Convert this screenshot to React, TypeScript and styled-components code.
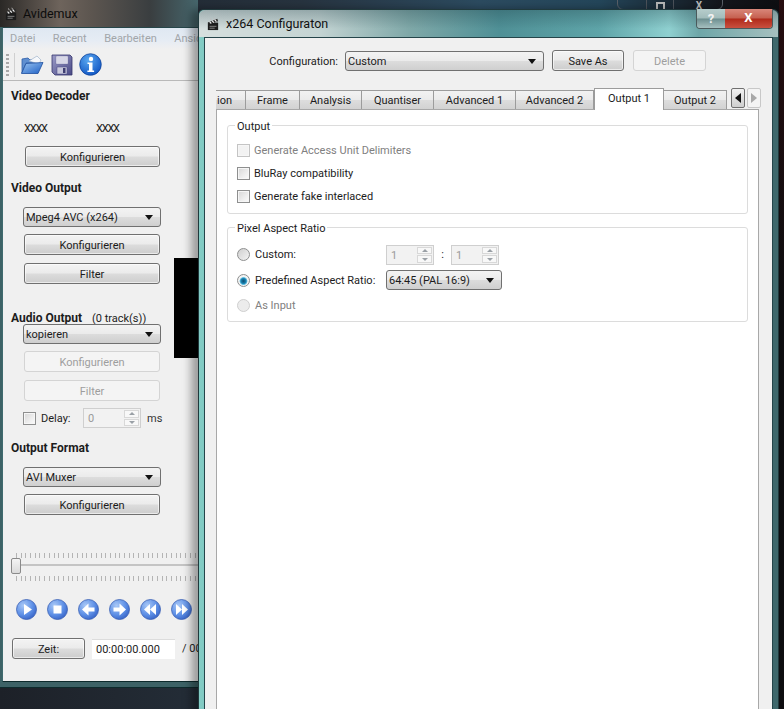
import styled, { createGlobalStyle } from "styled-components";

const GlobalStyle = createGlobalStyle`
  html, body {
    margin: 0;
    padding: 0;
    background: #000;
  }
  body {
    font-family: "Roboto", "Open Sans", sans-serif;
    font-size: 11px;
    color: #1c1c1c;
  }
  * {
    box-sizing: border-box;
  }
`;

const Desktop = styled.div`
  position: relative;
  width: 784px;
  height: 709px;
  overflow: hidden;
  background:
    linear-gradient(180deg, rgba(60, 12, 14, 0.55) 0, rgba(0, 0, 0, 0) 300px) 779px 0 no-repeat,
    linear-gradient(90deg, #1d2128 0, #27333f 300px, #2c4b60 480px, #24465a 600px, #14161c 720px, #0d0d10 100%);
`;

const BehindControls = styled.div`
  position: absolute;
  left: 617px;
  top: -6px;
  width: 106px;
  height: 16px;
  display: grid;
  grid-template-columns: 29px 27px 50px;
  border: 1px solid #5a6068;
  border-radius: 0 0 6px 6px;
  color: #b8b8b8;
  font-size: 10px;
  font-weight: 700;
  text-align: center;
`;

const BehindCell = styled.div`
  padding-top: 5px;
  border-right: 1px solid #4c525a;
  &:last-child {
    border-right: 0;
  }
`;

const BehindMax = styled.div`
  width: 9px;
  height: 9px;
  margin: 2px auto 0;
  border: 2px solid #b8b8b8;
`;

const MainWindow = styled.div`
  position: absolute;
  left: 0;
  top: 0;
  width: 198px;
  height: 688px;
  display: flex;
  flex-direction: column;
  padding: 0 0 5px 2px;
  border-bottom: 1px solid #0d2a2c;
  background:
    linear-gradient(90deg, #2a2826 0, #6e645c 60px, #5d5650 90px, #3a3e40 150px, #46666c 198px) 0 0 / 100% 27px no-repeat,
    #3d6266;
`;

const MainTitle = styled.div`
  flex: none;
  height: 27px;
  display: flex;
  align-items: center;
  gap: 6px;
  padding-left: 3px;
  font-size: 12.5px;
  color: #0c0c0c;
`;

const MainClient = styled.div`
  flex: 1;
  display: flex;
  flex-direction: column;
  overflow: hidden;
  background: #f0f0f0;
  border-top: 1px solid #26464a;
  border-left: 1px solid #3f6a6e;
  border-bottom: 1px solid #0d2a2c;
`;

const MenuBar = styled.div`
  flex: none;
  height: 21px;
  display: flex;
  align-items: center;
  gap: 17.5px;
  padding-left: 7px;
  color: #a2a6aa;
  white-space: nowrap;
  background: linear-gradient(180deg, #dfe8f2 0, #e6ecf4 60%, #f0f0f0 100%);
`;

const ToolBar = styled.div`
  flex: none;
  height: 32px;
  display: flex;
  align-items: center;
  gap: 5px;
  padding-left: 3px;
  border-bottom: 1px solid #b9b9b9;
`;

const Grip = styled.div`
  width: 3px;
  height: 22px;
  background: repeating-linear-gradient(180deg, #a8a8a8 0, #a8a8a8 2px, transparent 2px, transparent 4px);
`;

const ToolSeparator = styled.div`
  width: 1px;
  height: 24px;
  background: #d0d0d0;
`;

const ToolIcons = styled.div`
  display: flex;
  align-items: center;
  gap: 6px;
`;

const Panel = styled.div`
  flex: 1;
  display: flex;
  flex-direction: column;
  align-items: flex-start;
  padding-left: 8px;
`;

const Heading = styled.div<{ $gap: number }>`
  height: 12px;
  line-height: 12px;
  margin-top: ${(p) => p.$gap}px;
  font-size: 12px;
  font-weight: 700;
  white-space: nowrap;
`;

const TrackCount = styled.span`
  margin-left: 10px;
  font-size: 11px;
  font-weight: 400;
`;

const DecoderRow = styled.div`
  display: grid;
  grid-template-columns: 72px 40px;
  margin: 21px 0 0 13px;
  height: 12px;
  line-height: 12px;
  font-size: 11px;
  letter-spacing: -1.2px;
`;

const PushButton = styled.button<{ $width: number; $left?: number; $gap?: number }>`
  flex: none;
  width: ${(p) => p.$width}px;
  height: 21px;
  margin: ${(p) => p.$gap ?? 0}px 0 0 ${(p) => p.$left ?? 0}px;
  padding: 1px 0 0;
  font: inherit;
  color: #1c1c1c;
  border: 1px solid #707070;
  border-radius: 3px;
  background: linear-gradient(180deg, #f3f3f3 0, #ebebeb 48%, #dcdcdc 52%, #cdcdcd 100%);
  box-shadow: inset 0 0 0 1px rgba(255, 255, 255, 0.6);

  &:disabled {
    color: #9e9e9e;
    border-color: #d4d4d4;
    background: #f4f4f4;
    box-shadow: none;
  }
`;

const Combo = styled.div<{ $width: number; $left?: number; $gap?: number }>`
  flex: none;
  width: ${(p) => p.$width}px;
  height: 20px;
  margin: ${(p) => p.$gap ?? 0}px 0 0 ${(p) => p.$left ?? 0}px;
  display: flex;
  align-items: center;
  justify-content: space-between;
  padding: 1px 7px 0 2px;
  border: 1px solid #707070;
  border-radius: 3px;
  white-space: nowrap;
  background: linear-gradient(180deg, #f3f3f3 0, #ebebeb 48%, #dcdcdc 52%, #cfcfcf 100%);
`;

const ComboArrow = styled.span`
  width: 0;
  height: 0;
  border-left: 4px solid transparent;
  border-right: 4px solid transparent;
  border-top: 5px solid #111;
`;

const DelayRow = styled.div`
  display: flex;
  align-items: center;
  height: 20px;
  margin: 7px 0 0 12px;
  white-space: nowrap;
`;

const CheckBox = styled.span<{ $off?: boolean }>`
  flex: none;
  width: 13px;
  height: 13px;
  border: 1px solid ${(p) => (p.$off ? "#c4c4c4" : "#8e8f8f")};
  background: ${(p) =>
    p.$off ? "#f2f2f2" : "linear-gradient(135deg, #d6d6d6 0, #eeeeee 60%, #fbfbfb 100%)"};
  box-shadow: inset 0 0 0 1px #f6f6f6;
`;

const DelayLabel = styled.span`
  width: 42px;
  margin-left: 5px;
`;

const Spin = styled.div<{ $width: number }>`
  flex: none;
  width: ${(p) => p.$width}px;
  height: 20px;
  display: flex;
  justify-content: space-between;
  padding-left: 4px;
  line-height: 20px;
  color: #9a9a9a;
  border: 1px solid #cfcfcf;
  background: #f2f2f2;
`;

const SpinArrows = styled.div`
  width: 15px;
  margin: 1px;
  display: grid;
  grid-template-rows: 1fr 1fr;
  gap: 1px;
`;

const SpinArrow = styled.div<{ $down?: boolean }>`
  display: flex;
  align-items: center;
  justify-content: center;
  background: #f8f8f8;
  border: 1px solid #d8d8d8;

  &::before {
    content: "";
    border-left: 3px solid transparent;
    border-right: 3px solid transparent;
    ${(p) => (p.$down ? "border-top" : "border-bottom")}: 3px solid #9aa0a6;
  }
`;

const MsLabel = styled.span`
  margin-left: 6px;
  color: #333;
`;

const Slider = styled.div`
  position: relative;
  flex: none;
  width: 190px;
  height: 28px;
  margin: 38px 0 0 5px;
  background:
    repeating-linear-gradient(90deg, #b4b4b4 0, #b4b4b4 1px, transparent 1px, transparent 4.7px) 0 0 / 100% 5px no-repeat,
    linear-gradient(#c4c4c4, #c4c4c4) -5px 11px / 200px 2px no-repeat,
    repeating-linear-gradient(90deg, #b4b4b4 0, #b4b4b4 1px, transparent 1px, transparent 4.7px) 0 23px / 100% 5px no-repeat;
`;

const SliderHandle = styled.div`
  position: absolute;
  left: -5px;
  top: 5px;
  width: 10px;
  height: 16px;
  border: 1px solid #8a8a8a;
  border-radius: 2px;
  background: linear-gradient(180deg, #f4f4f4 0, #dadada 100%);
`;

const MediaRow = styled.div`
  display: flex;
  gap: 10px;
  margin: 18px 0 0 5px;
`;

const TimeRow = styled.div`
  display: flex;
  align-items: center;
  margin: 18px 0 0 1px;
  white-space: nowrap;
`;

const TimeField = styled.div`
  flex: none;
  width: 83px;
  height: 20px;
  margin-left: 7px;
  padding-left: 4px;
  line-height: 20px;
  background: #fff;
  border-top: 1px solid #dcdcdc;
`;

const TimeTotal = styled.span`
  margin-left: 7px;
`;

const VideoArea = styled.div`
  position: absolute;
  left: 174px;
  top: 258px;
  width: 24px;
  height: 100px;
  background: #000;
`;

const Dialog = styled.div`
  position: absolute;
  left: 198px;
  top: 9px;
  width: 581px;
  height: 720px;
  display: flex;
  flex-direction: column;
  padding: 0 5px;
  border: 1px solid #20393c;
  border-radius: 6px 6px 0 0;
  background: linear-gradient(90deg, #84cdc6 0, #7cc4bc 12px, #3f686c 12px, #3f686c 100%);
  box-shadow: -7px 0 8px rgba(0, 0, 0, 0.35);
`;

const DialogTitle = styled.div`
  position: relative;
  flex: none;
  height: 27px;
  margin: 0 -5px;
  display: flex;
  align-items: center;
  gap: 7px;
  padding-left: 8px;
  font-size: 12.5px;
  color: #111;
  border-radius: 6px 6px 0 0;
  background:
    linear-gradient(180deg, rgba(20, 50, 60, 0.28) 0, rgba(20, 50, 60, 0) 70%),
    linear-gradient(90deg, #d6dfde 0, #c4d4d3 120px, #7fa8a8 210px, #4f9096 300px, #5ea4a8 400px, #8fd0d0 470px, #6ea6a8 500px, #a6c0bf 100%);
`;

const TitleButtons = styled.div`
  position: absolute;
  right: 5px;
  top: -1px;
  height: 20px;
  display: flex;
  overflow: hidden;
  border: 1px solid #4a5a5c;
  border-top: 0;
  border-radius: 0 0 4px 4px;
  font-weight: 700;
  color: #fff;
`;

const HelpButton = styled.div`
  width: 28px;
  text-align: center;
  line-height: 19px;
  font-size: 13px;
  color: #f2f2f2;
  background: linear-gradient(180deg, #b7cdcc 0, #a2bcbb 48%, #6d8f90 52%, #a6c0c0 100%);
`;

const CloseButton = styled.div`
  width: 47px;
  text-align: center;
  line-height: 18px;
  font-size: 13px;
  background: linear-gradient(180deg, #d9877a 0, #c5604f 48%, #b02a1a 52%, #c9503f 100%);
`;

const DialogClient = styled.div`
  flex: 1;
  display: flex;
  flex-direction: column;
  min-height: 0;
  background: #f0f0f0;
  border: 1px solid #25454a;
  border-bottom: 0;
`;

const ConfigRow = styled.div`
  flex: none;
  display: flex;
  align-items: center;
  height: 21px;
  margin-top: 12px;
`;

const ConfigLabel = styled.div`
  width: 133px;
  padding-top: 1px;
  text-align: right;
`;

const TabStrip = styled.div`
  flex: none;
  width: 545px;
  height: 21px;
  margin: 17px 0 0 11px;
  display: flex;
  align-items: flex-end;
`;

const Tab = styled.div<{ $width: number; $active?: boolean }>`
  flex: none;
  width: ${(p) => p.$width}px;
  height: ${(p) => (p.$active ? 22 : 19)}px;
  margin-bottom: ${(p) => (p.$active ? -1 : 0)}px;
  line-height: 20px;
  text-align: center;
  border: 1px solid #9c9c9c;
  border-left: 0;
  border-bottom: 0;
  position: relative;
  z-index: ${(p) => (p.$active ? 1 : 0)};
  background: ${(p) =>
    p.$active ? "#fff" : "linear-gradient(180deg, #f2f2f2 0, #ebebeb 48%, #dddddd 52%, #d2d2d2 100%)"};

  ${(p) => p.$active && "border-left: 1px solid #9c9c9c;"}
`;

const ClippedTab = styled(Tab)`
  border-top: 1px solid #9c9c9c;
  text-align: left;
  padding-left: 1px;
`;

const TabScroll = styled.div`
  display: flex;
  gap: 2px;
  height: 20px;
  margin: 0 0 1px 4px;
  align-self: flex-start;
`;

const TabScrollButton = styled.div<{ $left?: boolean }>`
  width: 14px;
  display: flex;
  align-items: center;
  justify-content: center;
  border: 1px solid ${(p) => (p.$left ? "#707070" : "#c8c8c8")};
  border-radius: 2px;
  background: ${(p) => (p.$left ? "linear-gradient(180deg, #f2f2f2, #cfcfcf)" : "#f4f4f4")};

  &::before {
    content: "";
    border-top: 5px solid transparent;
    border-bottom: 5px solid transparent;
    ${(p) => (p.$left ? "border-right: 6px solid #111;" : "border-left: 6px solid #a8a8a8;")}
  }
`;

const TabPanel = styled.div`
  flex: 1;
  width: 543px;
  margin-left: 11px;
  padding: 9px 10px 0;
  background: #fff;
  border: 1px solid #a8a8a8;
`;

const Group = styled.fieldset<{ $gap?: number; $top: number; $bottom: number }>`
  margin: ${(p) => p.$gap ?? 0}px 0 0;
  padding: ${(p) => p.$top}px 9px ${(p) => p.$bottom}px;
  min-width: 0;
  border: 1px solid #dcdcdc;
  border-radius: 3px;
`;

const GroupTitle = styled.legend`
  height: 12px;
  line-height: 15px;
  margin-left: -2px;
  padding: 0 2px;
`;

const CheckRow = styled.div<{ $off?: boolean }>`
  display: flex;
  align-items: center;
  gap: 4px;
  height: 23px;
  color: ${(p) => (p.$off ? "#808080" : "#1c1c1c")};
`;

const RatioRow = styled.div<{ $off?: boolean }>`
  display: grid;
  grid-template-columns: 18px 131px auto;
  align-items: center;
  height: 25.5px;
  color: ${(p) => (p.$off ? "#808080" : "#1c1c1c")};
`;

const Radio = styled.span<{ $on?: boolean; $off?: boolean }>`
  width: 13px;
  height: 13px;
  border-radius: 50%;
  border: 1px solid ${(p) => (p.$off ? "#cfcfcf" : "#8e8f8f")};
  background: ${(p) =>
    p.$on
      ? "radial-gradient(circle at 50% 55%, #0b4a6e 0, #1d86b4 32%, #6cc4e4 44%, #f4f4f4 52%)"
      : p.$off
        ? "#ececec"
        : "linear-gradient(135deg, #cfcfcf 0, #f4f4f4 100%)"};
`;

const SpinPair = styled.div`
  display: flex;
  align-items: center;
`;

const SpinColon = styled.span`
  width: 17px;
  text-align: center;
`;

const Clapper = () => (
  <svg width="12" height="14" viewBox="0 0 14 15" preserveAspectRatio="none">
    <path d="M1 6h12v8H1z" fill="#1c1c1c" />
    <path d="M1 6l11-4 1 2.5L2 8z" fill="#2a2a2a" />
    <path d="M3 5l2 2M6 4l2 2M9 3l2 2" stroke="#eee" strokeWidth="1.3" />
    <path d="M4 1.5l1 2M8 .8l1 2" stroke="#bbb" strokeWidth="1" />
    <path d="M3 10h8M3 12h6" stroke="#8a8a8a" strokeWidth="1" />
  </svg>
);

const FolderIcon = () => (
  <svg width="24" height="22" viewBox="0 0 24 22">
    <defs>
      <linearGradient id="folderFill" x1="0" y1="0" x2="1" y2="1">
        <stop offset="0" stopColor="#9cc6f2" />
        <stop offset="1" stopColor="#1d5fc4" />
      </linearGradient>
    </defs>
    <path d="M2 5l6-1 2 2 8-1v4H6L2 19z" fill="#5f8fd0" stroke="#2c5da8" strokeWidth=".8" />
    <path d="M9 7l8-5 4 4-2 4z" fill="#f6f8fb" stroke="#93a9c4" strokeWidth=".6" />
    <path d="M6 9.5l17-1-5 11H1.5z" fill="url(#folderFill)" stroke="#1d4e9e" strokeWidth=".8" />
  </svg>
);

const FloppyIcon = () => (
  <svg width="23" height="24" viewBox="0 0 23 24">
    <defs>
      <linearGradient id="floppyFill" x1="0" y1="0" x2="1" y2="1">
        <stop offset="0" stopColor="#9c9cc8" />
        <stop offset="1" stopColor="#4a4a86" />
      </linearGradient>
    </defs>
    <path d="M2 2h18l2 2v18H5l-3-3z" fill="url(#floppyFill)" stroke="#36366c" strokeWidth=".8" />
    <path d="M6 3h12v8H6z" fill="#e9e9f2" stroke="#6e6e9e" strokeWidth=".5" />
    <path d="M7 5h10M7 7h10M7 9h10" stroke="#b8b8d4" strokeWidth=".7" />
    <path d="M7 14h10v7H7z" fill="#c8c8dc" stroke="#4a4a86" strokeWidth=".5" />
    <path d="M13 15h2.5v5H13z" fill="#3e3e72" />
  </svg>
);

const InfoIcon = () => (
  <svg width="23" height="23" viewBox="0 0 23 23">
    <defs>
      <radialGradient id="infoFill" cx=".4" cy=".3" r=".8">
        <stop offset="0" stopColor="#5aa8f0" />
        <stop offset="1" stopColor="#0b4fc0" />
      </radialGradient>
    </defs>
    <circle cx="11.5" cy="11.5" r="10.8" fill="url(#infoFill)" stroke="#0c3d94" strokeWidth=".7" />
    <circle cx="12" cy="6" r="2.2" fill="#fff" />
    <path d="M8.5 9.5h5v8h1.6v1.6H8.4v-1.6h1.6v-6.4H8.5z" fill="#fff" />
  </svg>
);

type Glyph = "play" | "stop" | "back" | "forward" | "rewind" | "skip";

const glyphs: Record<Glyph, string> = {
  play: "M8 5l8 5.5L8 16z",
  stop: "M6.5 6.5h8v8h-8z",
  back: "M10.5 4.5v4h6v4h-6v4L4 10.5z",
  forward: "M10.5 4.5v4h-6v4h6v4l6.5-6z",
  rewind: "M10 5v11L4 10.5zM16 5v11l-6-5.5z",
  skip: "M5 5v11l6-5.5zM11 5v11l6-5.5z",
};

const MediaIcon = ({ glyph }: { glyph: Glyph }) => (
  <svg width="21" height="21" viewBox="0 0 21 21">
    <defs>
      <radialGradient id={`media-${glyph}`} cx=".35" cy=".3" r=".85">
        <stop offset="0" stopColor="#a9c8f6" />
        <stop offset=".55" stopColor="#5d8fe6" />
        <stop offset="1" stopColor="#2c56bc" />
      </radialGradient>
    </defs>
    <circle cx="10.5" cy="10.5" r="10" fill={`url(#media-${glyph})`} stroke="#3a5fb4" strokeWidth=".8" />
    <path d={glyphs[glyph]} fill="#fff" />
  </svg>
);

const mediaButtons: Glyph[] = ["play", "stop", "back", "forward", "rewind", "skip"];

const tabs = [
  { label: "Frame", width: 54 },
  { label: "Analysis", width: 62 },
  { label: "Quantiser", width: 72 },
  { label: "Advanced 1", width: 82 },
  { label: "Advanced 2", width: 78 },
];

function SpinBox({ value, width }: { value: string; width: number }) {
  return (
    <Spin $width={width}>
      {value}
      <SpinArrows>
        <SpinArrow />
        <SpinArrow $down />
      </SpinArrows>
    </Spin>
  );
}

export default function App() {
  return (
    <>
      <GlobalStyle />
      <Desktop>
        <BehindControls>
          <BehindCell />
          <BehindCell>
            <BehindMax />
          </BehindCell>
          <BehindCell>X</BehindCell>
        </BehindControls>

        <MainWindow>
          <MainTitle>
            <Clapper />
            Avidemux
          </MainTitle>
          <MainClient>
            <MenuBar>
              <span>Datei</span>
              <span>Recent</span>
              <span>Bearbeiten</span>
              <span>Ansicht</span>
            </MenuBar>
            <ToolBar>
              <Grip />
              <ToolSeparator />
              <ToolIcons>
                <FolderIcon />
                <FloppyIcon />
                <InfoIcon />
              </ToolIcons>
            </ToolBar>
            <Panel>
              <Heading $gap={9}>Video Decoder</Heading>
              <DecoderRow>
                <span>XXXX</span>
                <span>XXXX</span>
              </DecoderRow>
              <PushButton $width={135} $left={14} $gap={11}>Konfigurieren</PushButton>

              <Heading $gap={15}>Video Output</Heading>
              <Combo $width={138} $left={12} $gap={13}>
                Mpeg4 AVC (x264)
                <ComboArrow />
              </Combo>
              <PushButton $width={136} $left={13} $gap={7}>Konfigurieren</PushButton>
              <PushButton $width={136} $left={13} $gap={8}>Filter</PushButton>

              <Heading $gap={28}>
                Audio Output<TrackCount>(0 track(s))</TrackCount>
              </Heading>
              <Combo $width={138} $left={12}>
                kopieren
                <ComboArrow />
              </Combo>
              <PushButton $width={136} $left={13} $gap={7} disabled>Konfigurieren</PushButton>
              <PushButton $width={136} $left={13} $gap={8} disabled>Filter</PushButton>
              <DelayRow>
                <CheckBox />
                <DelayLabel>Delay:</DelayLabel>
                <SpinBox value="0" width={58} />
                <MsLabel>ms</MsLabel>
              </DelayRow>

              <Heading $gap={14}>Output Format</Heading>
              <Combo $width={138} $left={12} $gap={13}>
                AVI Muxer
                <ComboArrow />
              </Combo>
              <PushButton $width={136} $left={13} $gap={7}>Konfigurieren</PushButton>

              <Slider>
                <SliderHandle />
              </Slider>
              <MediaRow>
                {mediaButtons.map((glyph) => (
                  <MediaIcon key={glyph} glyph={glyph} />
                ))}
              </MediaRow>
              <TimeRow>
                <PushButton $width={73}>Zeit:</PushButton>
                <TimeField>00:00:00.000</TimeField>
                <TimeTotal>/ 00:00:00.000</TimeTotal>
              </TimeRow>
            </Panel>
          </MainClient>
          <VideoArea />
        </MainWindow>

        <Dialog>
          <DialogTitle>
            <Clapper />
            x264 Configuraton
            <TitleButtons>
              <HelpButton>?</HelpButton>
              <CloseButton>X</CloseButton>
            </TitleButtons>
          </DialogTitle>
          <DialogClient>
            <ConfigRow>
              <ConfigLabel>Configuration:</ConfigLabel>
              <Combo $width={199} $left={7}>
                Custom
                <ComboArrow />
              </Combo>
              <PushButton $width={72} $left={8}>Save As</PushButton>
              <PushButton $width={73} $left={9} disabled>Delete</PushButton>
            </ConfigRow>

            <TabStrip>
              <ClippedTab $width={30}>ion</ClippedTab>
              {tabs.map((tab) => (
                <Tab key={tab.label} $width={tab.width}>{tab.label}</Tab>
              ))}
              <Tab $width={70} $active>Output 1</Tab>
              <Tab $width={63}>Output 2</Tab>
              <TabScroll>
                <TabScrollButton $left />
                <TabScrollButton />
              </TabScroll>
            </TabStrip>

            <TabPanel>
              <Group $top={8} $bottom={5}>
                <GroupTitle>Output</GroupTitle>
                <CheckRow $off>
                  <CheckBox $off />
                  Generate Access Unit Delimiters
                </CheckRow>
                <CheckRow>
                  <CheckBox />
                  BluRay compatibility
                </CheckRow>
                <CheckRow>
                  <CheckBox />
                  Generate fake interlaced
                </CheckRow>
              </Group>

              <Group $gap={7} $top={9} $bottom={2.5}>
                <GroupTitle>Pixel Aspect Ratio</GroupTitle>
                <RatioRow>
                  <Radio />
                  Custom:
                  <SpinPair>
                    <SpinBox value="1" width={48} />
                    <SpinColon>:</SpinColon>
                    <SpinBox value="1" width={48} />
                  </SpinPair>
                </RatioRow>
                <RatioRow>
                  <Radio $on />
                  Predefined Aspect Ratio:
                  <Combo $width={116}>
                    64:45 (PAL 16:9)
                    <ComboArrow />
                  </Combo>
                </RatioRow>
                <RatioRow $off>
                  <Radio $off />
                  As Input
                </RatioRow>
              </Group>
            </TabPanel>
          </DialogClient>
        </Dialog>
      </Desktop>
    </>
  );
}
